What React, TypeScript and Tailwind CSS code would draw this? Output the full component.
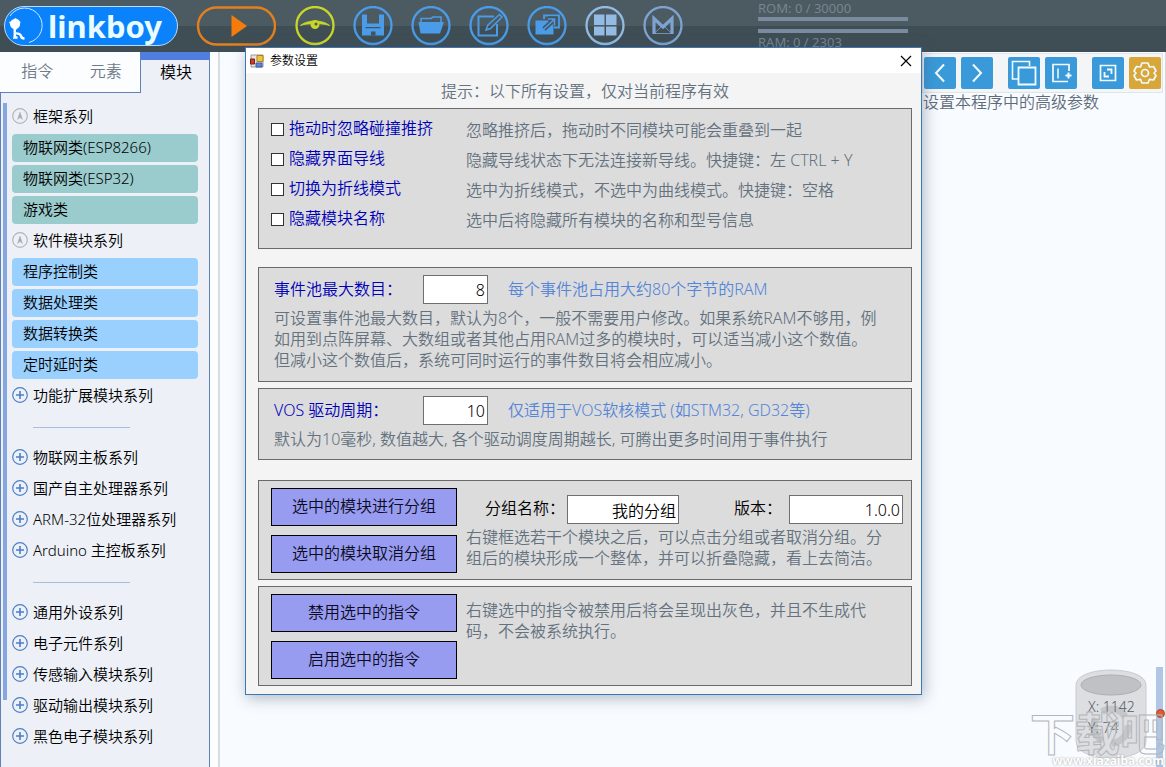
import React, { useState } from 'react';

type SeriesItem =
  | { kind: 'open' | 'closed'; label: string }
  | { kind: 'teal' | 'sky'; label: string }
  | { kind: 'divider'; label: string };

const SERIES: SeriesItem[] = [
  { kind: 'open', label: '框架系列' },
  { kind: 'teal', label: '物联网类(ESP8266)' },
  { kind: 'teal', label: '物联网类(ESP32)' },
  { kind: 'teal', label: '游戏类' },
  { kind: 'open', label: '软件模块系列' },
  { kind: 'sky', label: '程序控制类' },
  { kind: 'sky', label: '数据处理类' },
  { kind: 'sky', label: '数据转换类' },
  { kind: 'sky', label: '定时延时类' },
  { kind: 'closed', label: '功能扩展模块系列' },
  { kind: 'divider', label: 'boards' },
  { kind: 'closed', label: '物联网主板系列' },
  { kind: 'closed', label: '国产自主处理器系列' },
  { kind: 'closed', label: 'ARM-32位处理器系列' },
  { kind: 'closed', label: 'Arduino 主控板系列' },
  { kind: 'divider', label: 'parts' },
  { kind: 'closed', label: '通用外设系列' },
  { kind: 'closed', label: '电子元件系列' },
  { kind: 'closed', label: '传感输入模块系列' },
  { kind: 'closed', label: '驱动输出模块系列' },
  { kind: 'closed', label: '黑色电子模块系列' },
];

const OPTIONS = [
  { id: 'ignore-push', label: '拖动时忽略碰撞推挤', hint: '忽略推挤后，拖动时不同模块可能会重叠到一起' },
  { id: 'hide-wire', label: '隐藏界面导线', hint: '隐藏导线状态下无法连接新导线。快捷键：左 CTRL + Y' },
  { id: 'polyline', label: '切换为折线模式', hint: '选中为折线模式，不选中为曲线模式。快捷键：空格' },
  { id: 'hide-name', label: '隐藏模块名称', hint: '选中后将隐藏所有模块的名称和型号信息' },
];

const Logo: React.FC = () => (
  <div className="flex h-10 w-[174px] shrink-0 items-center rounded-full border border-[#b9dcff] bg-[#0a82fb]">
    <svg className="h-[38px] w-[38px] shrink-0" viewBox="0 0 38 38" fill="none">
      <path d="M5 9A17.500 17.500 0 1 1 24 35.500" stroke="#cfe8ff" strokeWidth="1" />
      <circle cx="10" cy="17" r="5" fill="#fff" />
      <path d="M4 15l4-1 2-3 3 1.500 2.500 2.500-1 4-3 3.500-4-1-1.500-3z" fill="#fff" />
      <path d="M10 21c-1 4 .5 6-.5 9.500h3M11 26c1.500 1 4.500.5 5 3 .3 2 1.500 2.500 3.500 2.500" stroke="#fff" strokeWidth="2.400" />
    </svg>
    <span className="ml-[5px] text-[31px] leading-9 font-bold text-[#e9fcff]">linkboy</span>
  </div>
);

const HeaderButton: React.FC<{ label: string; color: string; children: React.ReactNode }> = ({
  label,
  color,
  children,
}) => (
  <button type="button" aria-label={label} className={`h-10 w-10 shrink-0 ${color}`}>
    <svg className="h-10 w-10" viewBox="0 0 40 40" fill="none" stroke="currentColor" strokeWidth="2">
      <circle cx="20" cy="19.500" r="18.500" strokeWidth="2.300" />
      {children}
    </svg>
  </button>
);

const Header: React.FC = () => (
  <header className="flex h-[52px] shrink-0 items-start bg-linear-to-b from-[#4c5b62] from-50% to-[#3f4e55] to-50% pl-1">
    <div className="flex items-center gap-[18px] pt-[6px]">
      <Logo />
      <button type="button" aria-label="运行" className="h-10 w-[81px] shrink-0 text-[#f57c0a]">
        <svg className="h-10 w-20" viewBox="0 0 80 40">
          <rect x="2" y="1.500" width="77" height="37" rx="18.500" fill="none" stroke="#e3801e" strokeWidth="2.400" />
          <path d="M35.500 9l15.500 11-15.500 11z" fill="currentColor" />
        </svg>
      </button>
      <HeaderButton label="预览" color="text-[#c9d726]">
        <path d="M5.500 19.500C12 13.500 28 13.500 34.500 19.500C29 17 11 17 5.500 19.500z" fill="currentColor" strokeWidth="0.800" />
        <circle cx="20" cy="18.500" r="4.500" fill="currentColor" stroke="none" />
        <circle cx="21" cy="18" r="1.500" fill="#4a5a62" stroke="none" />
      </HeaderButton>
      <HeaderButton label="保存" color="text-[#4a9be8]">
        <path
          d="M9 8.500h22v21H9z M14 8.500v9h12v-9z M13 22v7.500h14V22z"
          fill="currentColor"
          fillRule="evenodd"
          stroke="none"
        />
        <path d="M13 22h14v7.500H13z" fill="currentColor" stroke="none" />
        <path d="M12.500 21h15v1.200h-15z M18 25.500h4.500v4H18z" fill="#44545c" stroke="none" />
      </HeaderButton>
      <HeaderButton label="打开" color="text-[#4a9be8]">
        <path d="M10 16v-3.500h10l2-1.500h8v5" strokeWidth="1.600" />
        <path d="M7.500 16h25.500l-4 11.500H9.500z" fill="currentColor" stroke="none" />
      </HeaderButton>
      <HeaderButton label="编辑" color="text-[#4a9be8]">
        <path d="M25 10.500H9.500v19H28V18" />
        <path d="M17 24l2-5L30.500 8.500l2.500 2.500L21.500 22.500z" strokeWidth="1.500" />
      </HeaderButton>
      <HeaderButton label="导出" color="text-[#4a9be8]">
        <path d="M17 13v-3.500h15v12h-5" strokeWidth="1.800" />
        <path d="M8.500 14.500h18v14h-18z" fill="currentColor" stroke="none" />
        <path d="M17 23L26.500 14M21 12.500h7v7" stroke="#44545c" strokeWidth="4.500" />
        <path d="M17 23L27 13.500M21 13h6.500v6.500" strokeWidth="1.700" />
      </HeaderButton>
      <HeaderButton label="模块库" color="text-[#93bbe3]">
        <path d="M9 8.500h10.500V19H9zM21 8.500h10.500V19H21zM9 20.500h10.500v9H9zM21 20.500h10.500v9H21z" fill="currentColor" stroke="none" />
      </HeaderButton>
      <HeaderButton label="消息" color="text-[#7ea3d3]">
        <path d="M11 28V12.500l9 8.500 9-8.500V28" strokeWidth="3.200" />
        <path d="M11 27.500l7-6.500M29 27.500L22 21M11 27.500h18" strokeWidth="0.800" />
      </HeaderButton>
    </div>
    <div className="ml-[75px] w-[150px] text-[13px] leading-[17px] font-normal whitespace-nowrap text-[#76858f]">
      <div>ROM: 0 / 30000</div>
      <div className="h-1 bg-[#7a8a9f]" />
      <div className="mt-2 h-1 bg-[#7a8a9f]" />
      <div className="mt-px">RAM: 0 / 2303</div>
    </div>
  </header>
);

const SeriesIcon: React.FC<{ open: boolean }> = ({ open }) =>
  open ? (
    <svg className="h-4 w-4 shrink-0" viewBox="0 0 16 16" fill="none" stroke="#b3b5b8">
      <circle cx="8" cy="8" r="7.300" strokeWidth="1.200" />
      <path d="M8 4l2.500 7.500L8 9.500l-2.500 2z" fill="#a5a7aa" strokeWidth="0.500" />
    </svg>
  ) : (
    <svg className="h-4 w-4 shrink-0" viewBox="0 0 16 16" fill="none" stroke="#4a7fc6">
      <circle cx="8" cy="8" r="7.300" strokeWidth="1.200" />
      <path d="M8 4v8M4 8h8" strokeWidth="1.600" />
    </svg>
  );

const SeriesRow: React.FC<{ item: SeriesItem }> = ({ item }) => {
  if (item.kind === 'divider') {
    return (
      <li className="flex h-[31px] items-center pt-[3px] pl-[21px]">
        <hr className="w-[97px] border-[#a9bddb]" />
      </li>
    );
  }
  if (item.kind === 'teal' || item.kind === 'sky') {
    return (
      <li className="flex h-[31px] items-end">
        <button
          type="button"
          className={`h-7 w-full rounded-[4px] pb-[2px] pl-[11px] text-left ${
            item.kind === 'teal' ? 'bg-[#9acbcd]' : 'bg-[#99d0fe]'
          }`}
        >
          {item.label}
        </button>
      </li>
    );
  }
  return (
    <li className="h-[31px]">
      <button type="button" className="flex h-full w-full items-center gap-[5px] text-left">
        <SeriesIcon open={item.kind === 'open'} />
        {item.label}
      </button>
    </li>
  );
};

const Sidebar: React.FC = () => (
  <aside className="flex w-[210px] shrink-0 flex-col bg-[#edf1f7]">
    <div className="flex h-[41px] shrink-0 text-base text-[#6f7b88]">
      <div className="flex flex-1 border-r border-b border-[#5f82b8] bg-[#fbfdff] pl-[3px]">
        <button type="button" className="flex-1 pb-[2px]">指令</button>
        <button type="button" className="flex-1 pb-[2px]">元素</button>
      </div>
      <button type="button" className="w-[69px] border-t-8 border-r border-t-[#4f7ee0] border-r-[#5f82b8] pb-3 pl-[2px] text-black">
        模块
      </button>
    </div>
    <div className="flex flex-1 border-x border-[#5f82b8] pt-[7px] pr-[11px] pl-[2px]">
      <div className="mt-[3px] mb-[67px] w-1 shrink-0 bg-[#86a6e0]" />
      <ul className="ml-[5px] flex-1 text-[15px] leading-5 whitespace-nowrap text-black">
        {SERIES.map((item) => (
          <SeriesRow key={item.label} item={item} />
        ))}
      </ul>
    </div>
  </aside>
);

const ToolButton: React.FC<{ label: string; active?: boolean; children: React.ReactNode }> = ({
  label,
  active,
  children,
}) => (
  <button
    type="button"
    aria-label={label}
    className={`h-8 w-8 rounded-[2px] ${active ? 'bg-[#d9a63a]' : 'bg-[#3a9ad9]'}`}
  >
    <svg className="h-8 w-8" viewBox="0 0 32 32" fill="none" stroke="#f2fbff" strokeWidth="2">
      {children}
    </svg>
  </button>
);

const Canvas: React.FC = () => (
  <main className="relative flex-1 overflow-hidden border-r border-[#d3d6da] bg-[#f8fbff]">
    <div className="mt-px mr-[2px] ml-auto w-fit">
      <div className="flex h-10 items-center gap-[15px] border border-[#e2e5e8] bg-[#f4f5f6] px-[1px]">
        <div className="flex gap-[5px]">
          <ToolButton label="后退">
            <path d="M20 7.500l-8 8.500 8 8.500" />
          </ToolButton>
          <ToolButton label="前进">
            <path d="M12 7.500l8 8.500-8 8.500" />
          </ToolButton>
        </div>
        <div className="flex gap-[5px]">
          <ToolButton label="复制">
            <path d="M10 22H4.500V4.500h17V9" strokeWidth="1.600" />
            <path d="M10.500 10.500h17v17h-17z" strokeWidth="1.800" />
          </ToolButton>
          <ToolButton label="添加">
            <path d="M24 14V7.500H8v17h15" strokeWidth="1.700" />
            <path d="M13 11.500v10" strokeWidth="1.500" />
            <path d="M23.500 15.500v6M20.500 18.500h6" />
          </ToolButton>
        </div>
        <div className="flex gap-[5px]">
          <ToolButton label="缩放">
            <path d="M8.500 8.500h15v15h-15z" strokeWidth="1.700" />
            <path d="M15 12.500h4.500V17M12.500 15v4.500H17" strokeWidth="1.800" />
          </ToolButton>
          <ToolButton label="设置" active>
            <path
              d="M13 6h6l1.500 4 4-.5 2.500 4.500-2 2 2 2.500-2.500 4.500-4-.7L19 26h-6l-1.500-3.700-4 .7L5 18.500 7 16l-2-2 2.500-4.500 4 .5z"
              strokeWidth="1.700"
              strokeLinejoin="round"
            />
            <circle cx="16" cy="16" r="3.500" strokeWidth="1.700" />
          </ToolButton>
        </div>
      </div>
      <p className="pl-px text-[16px] leading-[19px] text-[#5f6b78]">设置本程序中的高级参数</p>
    </div>

    {/* trash bin with cursor coordinates */}
    <div className="absolute right-[18px] bottom-2 h-[90px] w-[72px]">
      <svg className="absolute inset-0 h-full w-full" viewBox="0 0 72 90">
        <path d="M1 16C1-4 71-4 71 16V72C71 95 1 95 1 72z" fill="#dcdee1" stroke="#c9ccd0" />
        <ellipse cx="36" cy="16" rx="30" ry="10" fill="#bfc2c5" stroke="#acaeb1" />
        <circle cx="36" cy="57" r="17" fill="none" stroke="#c4c7ca" strokeWidth="7" strokeDasharray="26 9" />
      </svg>
      <div className="relative pt-[27px] pl-[13px] text-sm leading-[21px] whitespace-nowrap text-[#555c66]">
        <div>X: 1142</div>
        <div>Y: 74</div>
      </div>
    </div>
    <div className="absolute right-[2px] bottom-0 h-[100px] w-[7px] bg-[#b1c5e5]">
      <div className="absolute top-[42px] left-0 h-[9px] w-[9px] rounded-full border border-[#a04a30] bg-[#e8572e]" />
    </div>
    <div className="absolute right-0 bottom-2 text-[45px] leading-[50px] font-bold whitespace-nowrap text-transparent [-webkit-text-stroke:1px_#b3b5b8]">
      下载吧
    </div>
    <div className="absolute right-px bottom-0 text-[12px] leading-3 font-bold text-white [text-shadow:0_0_2px_#999]">
      www.xiazaiba.com
    </div>
  </main>
);

const Panel: React.FC<{ className: string; children: React.ReactNode }> = ({ className, children }) => (
  <section className={`border border-[#6a6a6a] bg-[#dcdcdc] ${className}`}>{children}</section>
);

const FIELD = 'h-[29px] border border-[#6f6f6f] bg-white px-[2px] text-right text-[16px] text-black outline-none';
const ACTION = 'h-[38px] w-full border border-black bg-[#989cf0] pb-[2px] text-[16px] text-[#0b0b24]';

const SettingsDialog: React.FC<{ onClose: () => void }> = ({ onClose }) => (
  <div
    role="dialog"
    aria-label="参数设置"
    className="absolute top-[47px] left-[245px] w-[677px] border border-[#3d78b3] bg-[#f4f4f4] text-[16px] leading-[21px] text-[#647280] shadow-[2px_3px_14px_rgba(60,80,110,0.4)]"
  >
    <div className="flex h-[25px] items-center bg-white pr-[9px] pl-1 text-xs text-black">
      <svg className="mr-[6px] h-[14px] w-[14px]" viewBox="0 0 14 14">
        <path d="M1 1h12v12H1z" fill="#e4e4e4" stroke="#999" />
        <path d="M7 1.500h6v6H7z" fill="#f4c43c" stroke="#a88420" />
        <path d="M0.500 5h4v5h-4z" fill="#d03a2a" stroke="#7d2018" />
        <path d="M6 9h6v4H6z" fill="#5c86d8" stroke="#3d5fa5" />
      </svg>
      <h1 className="flex-1">参数设置</h1>
      <button type="button" aria-label="关闭" onClick={onClose}>
        <svg className="h-3 w-3" viewBox="0 0 12 12" stroke="#000" strokeWidth="1.200">
          <path d="M1 1l10 10M11 1L1 11" />
        </svg>
      </button>
    </div>

    <div className="pt-2 pr-[9px] pb-2 pl-3">
      <p className="text-center">提示：以下所有设置，仅对当前程序有效</p>

      <Panel className="mt-[6px] pt-[5px] pb-[14px] pl-3">
        {OPTIONS.map((option) => (
          <div key={option.id} className="flex h-[30px] items-center whitespace-nowrap">
            <div className="flex w-[195px] shrink-0 items-center gap-[5px]">
              <input
                id={option.id}
                type="checkbox"
                className="h-[13px] w-[13px] appearance-none border border-[#333] bg-white checked:bg-[#3a9ad9]"
              />
              <label htmlFor={option.id} className="pb-[2px] text-[#0000b8]">{option.label}</label>
            </div>
            <span className="pt-[2px]">{option.hint}</span>
          </div>
        ))}
      </Panel>

      <Panel className="mt-[18px] pt-[7px] pr-3 pb-[10px] pl-[15px]">
        <div className="flex items-center">
          <label htmlFor="pool" className="w-[149px] text-[#0000b8]">事件池最大数目：</label>
          <input id="pool" type="text" defaultValue="8" className={`w-[65px] ${FIELD}`} />
          <span className="ml-5 text-[#5585d8]">每个事件池占用大约80个字节的RAM</span>
        </div>
        <p className="mt-1 whitespace-nowrap">
          可设置事件池最大数目，默认为8个，一般不需要用户修改。如果系统RAM不够用，例
          <br />
          如用到点阵屏幕、大数组或者其他占用RAM过多的模块时，可以适当减小这个数值。
          <br />
          但减小这个数值后，系统可同时运行的事件数目将会相应减小。
        </p>
      </Panel>

      <Panel className="mt-[6px] pt-[7px] pr-3 pb-[9px] pl-[15px]">
        <div className="flex items-center">
          <label htmlFor="period" className="w-[149px] text-[#0000b8]">VOS 驱动周期：</label>
          <input id="period" type="text" defaultValue="10" className={`w-[65px] ${FIELD}`} />
          <span className="ml-5 text-[#5585d8]">仅适用于VOS软核模式 (如STM32, GD32等)</span>
        </div>
        <p className="mt-1">默认为10毫秒, 数值越大, 各个驱动调度周期越长, 可腾出更多时间用于事件执行</p>
      </Panel>

      <Panel className="mt-5 flex gap-[9px] pt-[7px] pr-2 pb-[6px] pl-3">
        <div className="flex w-[186px] shrink-0 flex-col gap-[9px]">
          <button type="button" className={ACTION}>选中的模块进行分组</button>
          <button type="button" className={ACTION}>选中的模块取消分组</button>
        </div>
        <div className="flex-1 pt-[7px]">
          <div className="flex items-center text-black">
            <label htmlFor="group-name" className="ml-[19px] w-[82px] pb-[2px]">分组名称：</label>
            <input id="group-name" type="text" defaultValue="我的分组" className={`w-[112px] ${FIELD}`} />
            <label htmlFor="version" className="ml-auto w-[55px] pb-[2px]">版本：</label>
            <input id="version" type="text" defaultValue="1.0.0" className={`w-[114px] ${FIELD}`} />
          </div>
          <p className="mt-[3px] whitespace-nowrap">
            右键框选若干个模块之后，可以点击分组或者取消分组。分
            <br />
            组后的模块形成一个整体，并可以折叠隐藏，看上去简洁。
          </p>
        </div>
      </Panel>

      <Panel className="mt-[6px] flex gap-[9px] pt-[7px] pr-2 pb-[6px] pl-3">
        <div className="flex w-[186px] shrink-0 flex-col gap-[9px]">
          <button type="button" className={ACTION}>禁用选中的指令</button>
          <button type="button" className={ACTION}>启用选中的指令</button>
        </div>
        <p className="flex-1 pt-[6px] whitespace-nowrap">
          右键选中的指令被禁用后将会呈现出灰色，并且不生成代
          <br />
          码，不会被系统执行。
        </p>
      </Panel>
    </div>
  </div>
);

const App: React.FC = () => {
  const [settingsOpen, setSettingsOpen] = useState(true);

  return (
    <div
      lang="zh-CN"
      className="relative flex h-screen flex-col overflow-hidden bg-[#f8fbff] font-['Noto_Sans','Noto_Sans_CJK_SC',sans-serif] font-[350]"
    >
      <Header />
      <div className="flex min-h-0 flex-1">
        <Sidebar />
        <div className="w-[10px] shrink-0 border-r-2 border-[#d9dde3] bg-[#fbfdff]" />
        <Canvas />
      </div>
      {settingsOpen && <SettingsDialog onClose={() => setSettingsOpen(false)} />}
    </div>
  );
};

export default App;
